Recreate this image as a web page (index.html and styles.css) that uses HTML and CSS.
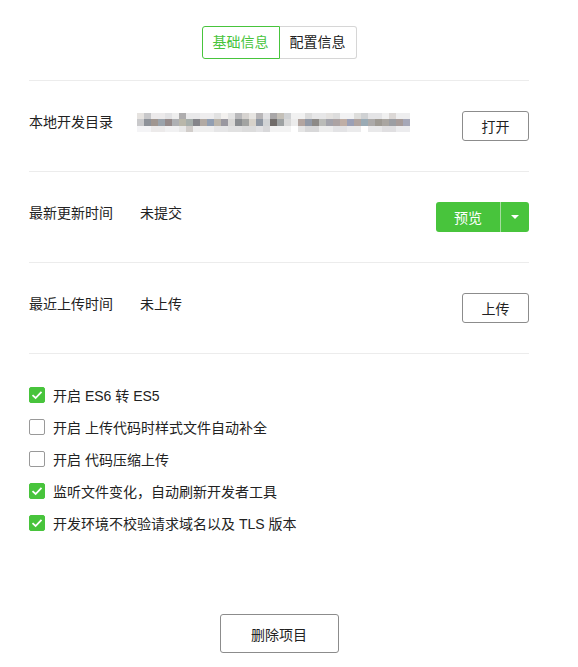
FILE: index.html
```html
<!DOCTYPE html>
<html lang="zh-CN">
<head>
  <meta charset="UTF-8">
  <meta name="viewport" content="width=device-width, initial-scale=1.0">
  <title>项目详情</title>
  <link rel="stylesheet" href="styles.css">
</head>
<body>
  <div class="page">
    <nav class="tabs">
      <span class="tab active">基础信息</span>
      <span class="tab">配置信息</span>
    </nav>

    <section class="row">
      <div class="label">本地开发目录</div>
      <div class="value">
        <svg class="mosaic" width="273" height="19" viewBox="0 0 273 19">
          <g>
            <rect x="0" y="0" width="7" height="6" fill="#e6e3e0"/><rect x="7" y="0" width="7" height="6" fill="#c8c8ca"/>
            <rect x="14" y="0" width="14" height="6" fill="#eceaeb"/><rect x="28" y="0" width="7" height="6" fill="#e2e2e4"/>
            <rect x="35" y="0" width="7" height="6" fill="#eeeeee"/><rect x="42" y="0" width="7" height="6" fill="#aeadae"/>
            <rect x="49" y="0" width="14" height="6" fill="#e9e9ea"/><rect x="63" y="0" width="14" height="6" fill="#eeedee"/>
            <rect x="77" y="0" width="7" height="6" fill="#e2e2e2"/><rect x="84" y="0" width="7" height="6" fill="#f3f1ef"/>
            <rect x="91" y="0" width="7" height="6" fill="#e4e4e4"/><rect x="98" y="0" width="7" height="6" fill="#b9b9bb"/>
            <rect x="105" y="0" width="7" height="6" fill="#d6d3d0"/><rect x="112" y="0" width="7" height="6" fill="#e7e5e2"/>
            <rect x="119" y="0" width="7" height="6" fill="#b8b6b8"/><rect x="126" y="0" width="7" height="6" fill="#e1e1e3"/>
            <rect x="133" y="0" width="7" height="6" fill="#a9a7a8"/><rect x="140" y="0" width="7" height="6" fill="#c4c0b8"/>
            <rect x="147" y="0" width="7" height="6" fill="#d0d2d4"/><rect x="154" y="0" width="14" height="6" fill="#f1f1f1"/>
            <rect x="168" y="0" width="7" height="6" fill="#dcdcdc"/><rect x="175" y="0" width="14" height="6" fill="#e7e7e8"/>
            <rect x="189" y="0" width="7" height="6" fill="#e4e2e0"/><rect x="196" y="0" width="7" height="6" fill="#dddddd"/>
            <rect x="203" y="0" width="14" height="6" fill="#f2f2f3"/><rect x="217" y="0" width="7" height="6" fill="#dededc"/>
            <rect x="224" y="0" width="7" height="6" fill="#cfd1d3"/><rect x="231" y="0" width="14" height="6" fill="#e4e4e6"/>
            <rect x="245" y="0" width="7" height="6" fill="#f0f0f0"/><rect x="252" y="0" width="7" height="6" fill="#dcd8d6"/>
            <rect x="259" y="0" width="14" height="6" fill="#eeeeef"/>
          </g>
          <g>
            <rect x="0" y="6" width="7" height="7" fill="#c9c9cb"/><rect x="7" y="6" width="7" height="7" fill="#8e9299"/>
            <rect x="14" y="6" width="7" height="7" fill="#a09690"/><rect x="21" y="6" width="7" height="7" fill="#9ba3ab"/>
            <rect x="28" y="6" width="7" height="7" fill="#958a8a"/><rect x="35" y="6" width="7" height="7" fill="#aeb0b3"/>
            <rect x="42" y="6" width="7" height="7" fill="#b9b7aa"/><rect x="49" y="6" width="7" height="7" fill="#a6aeab"/>
            <rect x="56" y="6" width="7" height="7" fill="#85858a"/><rect x="63" y="6" width="7" height="7" fill="#b2aaa3"/>
            <rect x="70" y="6" width="7" height="7" fill="#929fb2"/><rect x="77" y="6" width="7" height="7" fill="#bbb5ab"/>
            <rect x="84" y="6" width="7" height="7" fill="#9a98a0"/><rect x="91" y="6" width="7" height="7" fill="#d9d8d6"/>
            <rect x="98" y="6" width="7" height="7" fill="#8a8d90"/><rect x="105" y="6" width="7" height="7" fill="#a3a4a2"/>
            <rect x="112" y="6" width="7" height="7" fill="#d7d2ca"/><rect x="119" y="6" width="7" height="7" fill="#8f97a3"/>
            <rect x="126" y="6" width="7" height="7" fill="#d1d3d5"/><rect x="133" y="6" width="7" height="7" fill="#716c6a"/>
            <rect x="140" y="6" width="7" height="7" fill="#9ea2a3"/><rect x="147" y="6" width="7" height="7" fill="#d9d9d9"/>
            <rect x="154" y="6" width="7" height="7" fill="#ececec"/><rect x="161" y="6" width="7" height="7" fill="#b3a5a0"/>
            <rect x="168" y="6" width="7" height="7" fill="#9299a6"/><rect x="175" y="6" width="7" height="7" fill="#8d8a87"/>
            <rect x="182" y="6" width="7" height="7" fill="#babbb8"/><rect x="189" y="6" width="7" height="7" fill="#a3a3ab"/>
            <rect x="196" y="6" width="7" height="7" fill="#aca3a3"/><rect x="203" y="6" width="7" height="7" fill="#bfaea5"/>
            <rect x="210" y="6" width="7" height="7" fill="#9ba0b6"/><rect x="217" y="6" width="7" height="7" fill="#b0a4a0"/>
            <rect x="224" y="6" width="7" height="7" fill="#9aabb5"/><rect x="231" y="6" width="7" height="7" fill="#acaaa9"/>
            <rect x="238" y="6" width="7" height="7" fill="#9e9a93"/><rect x="245" y="6" width="7" height="7" fill="#aaa6a1"/>
            <rect x="252" y="6" width="7" height="7" fill="#9c9ea3"/><rect x="259" y="6" width="7" height="7" fill="#a79c9a"/>
            <rect x="266" y="6" width="7" height="7" fill="#a6a8b8"/>
          </g>
          <g>
            <rect x="0" y="13" width="14" height="6" fill="#f4f4f6"/><rect x="14" y="13" width="14" height="6" fill="#eceaea"/>
            <rect x="28" y="13" width="14" height="6" fill="#f1f1f2"/><rect x="42" y="13" width="7" height="6" fill="#e8e8e8"/>
            <rect x="49" y="13" width="7" height="6" fill="#d1cdca"/><rect x="56" y="13" width="21" height="6" fill="#efefef"/>
            <rect x="77" y="13" width="14" height="6" fill="#e6e6e7"/><rect x="91" y="13" width="14" height="6" fill="#e1e1e1"/>
            <rect x="105" y="13" width="14" height="6" fill="#dcdcdc"/><rect x="119" y="13" width="7" height="6" fill="#e2e2e4"/>
            <rect x="126" y="13" width="7" height="6" fill="#d8d8da"/><rect x="133" y="13" width="21" height="6" fill="#f3f3f3"/>
            <rect x="154" y="13" width="7" height="6" fill="#ffffff"/><rect x="161" y="13" width="7" height="6" fill="#e5e5e5"/>
            <rect x="168" y="13" width="14" height="6" fill="#d8d8d9"/><rect x="182" y="13" width="14" height="6" fill="#ededed"/>
            <rect x="196" y="13" width="14" height="6" fill="#e3e3e5"/><rect x="210" y="13" width="14" height="6" fill="#ebebec"/>
            <rect x="224" y="13" width="7" height="6" fill="#ffffff"/><rect x="231" y="13" width="14" height="6" fill="#e9e9ea"/>
            <rect x="245" y="13" width="14" height="6" fill="#e0dfe1"/><rect x="259" y="13" width="14" height="6" fill="#ececee"/>
          </g>
        </svg>
      </div>
      <button class="btn">打开</button>
    </section>

    <section class="row">
      <div class="label">最新更新时间</div>
      <div class="value">未提交</div>
      <div class="split">
        <button class="split-main">预览</button>
        <button class="split-caret"><span class="caret"></span></button>
      </div>
    </section>

    <section class="row">
      <div class="label">最近上传时间</div>
      <div class="value">未上传</div>
      <button class="btn">上传</button>
    </section>

    <section class="options">
      <label class="option"><span class="check on"><svg width="12" height="10" viewBox="0 0 12 10"><path d="M1.5 5.2 4.6 8 10.5 1.8" fill="none" stroke="#fff" stroke-width="1.8"/></svg></span>开启 ES6 转 ES5</label>
      <label class="option"><span class="check"></span>开启 上传代码时样式文件自动补全</label>
      <label class="option"><span class="check"></span>开启 代码压缩上传</label>
      <label class="option"><span class="check on"><svg width="12" height="10" viewBox="0 0 12 10"><path d="M1.5 5.2 4.6 8 10.5 1.8" fill="none" stroke="#fff" stroke-width="1.8"/></svg></span>监听文件变化，自动刷新开发者工具</label>
      <label class="option"><span class="check on"><svg width="12" height="10" viewBox="0 0 12 10"><path d="M1.5 5.2 4.6 8 10.5 1.8" fill="none" stroke="#fff" stroke-width="1.8"/></svg></span>开发环境不校验请求域名以及 TLS 版本</label>
    </section>

    <div class="footer">
      <button class="btn btn-large">删除项目</button>
    </div>
  </div>
</body>
</html>
```

FILE: styles.css
```css
:root {
  --green: #48c43c;
  --text: #222;
  --line: #ececec;
  --btn-border: #8c8c8c;
}
* { box-sizing: border-box; margin: 0; padding: 0; }
body {
  font-family: "Liberation Sans", "Noto Sans CJK SC", sans-serif;
  font-size: 14px;
  color: var(--text);
  background: #fff;
}
.page {
  width: 500px;
  margin-left: 29px;
  padding-top: 26px;
}
.tabs {
  display: flex;
  justify-content: center;
  padding-bottom: 21px;
  border-bottom: 1px solid var(--line);
}
.tab {
  height: 33px;
  line-height: 31px;
  padding: 0 10px;
  border: 1px solid #d6d6d6;
  border-left: none;
  border-radius: 0 3px 3px 0;
}
.tab.active {
  color: var(--green);
  border: 1px solid var(--green);
  border-radius: 3px 0 0 3px;
}
.row {
  display: flex;
  align-items: flex-start;
  padding: 30px 0;
  border-bottom: 1px solid var(--line);
}
.label {
  width: 111px;
  line-height: 22px;
}
.value {
  flex: 1;
  line-height: 22px;
}
.mosaic {
  display: block;
  margin: 2px 0 0 -3px;
}
button {
  font-family: inherit;
  font-size: 14px;
  color: var(--text);
  background: #fff;
  cursor: pointer;
}
.btn {
  width: 67px;
  height: 30px;
  border: 1px solid var(--btn-border);
  border-radius: 3px;
}
.split {
  display: flex;
  height: 30px;
  border-radius: 3px;
  overflow: hidden;
}
.split-main,
.split-caret {
  border: none;
  background: var(--green);
  color: #fff;
}
.split-main {
  width: 65px;
  border-right: 1px solid #a6dd9f;
}
.split-caret {
  width: 28px;
  display: flex;
  align-items: center;
  justify-content: center;
}
.caret {
  width: 0;
  height: 0;
  border-left: 4px solid transparent;
  border-right: 4px solid transparent;
  border-top: 4px solid #fff;
}
.options {
  padding-top: 25px;
}
.option {
  display: flex;
  align-items: center;
  height: 32px;
}
.check {
  width: 16px;
  height: 16px;
  margin-right: 8px;
  border: 1px solid #999;
  border-radius: 2px;
  display: flex;
  align-items: center;
  justify-content: center;
}
.check.on {
  background: var(--green);
  border-color: var(--green);
}
.footer {
  display: flex;
  justify-content: center;
  padding-top: 75px;
}
.btn-large {
  width: 119px;
  height: 39px;
}
```
